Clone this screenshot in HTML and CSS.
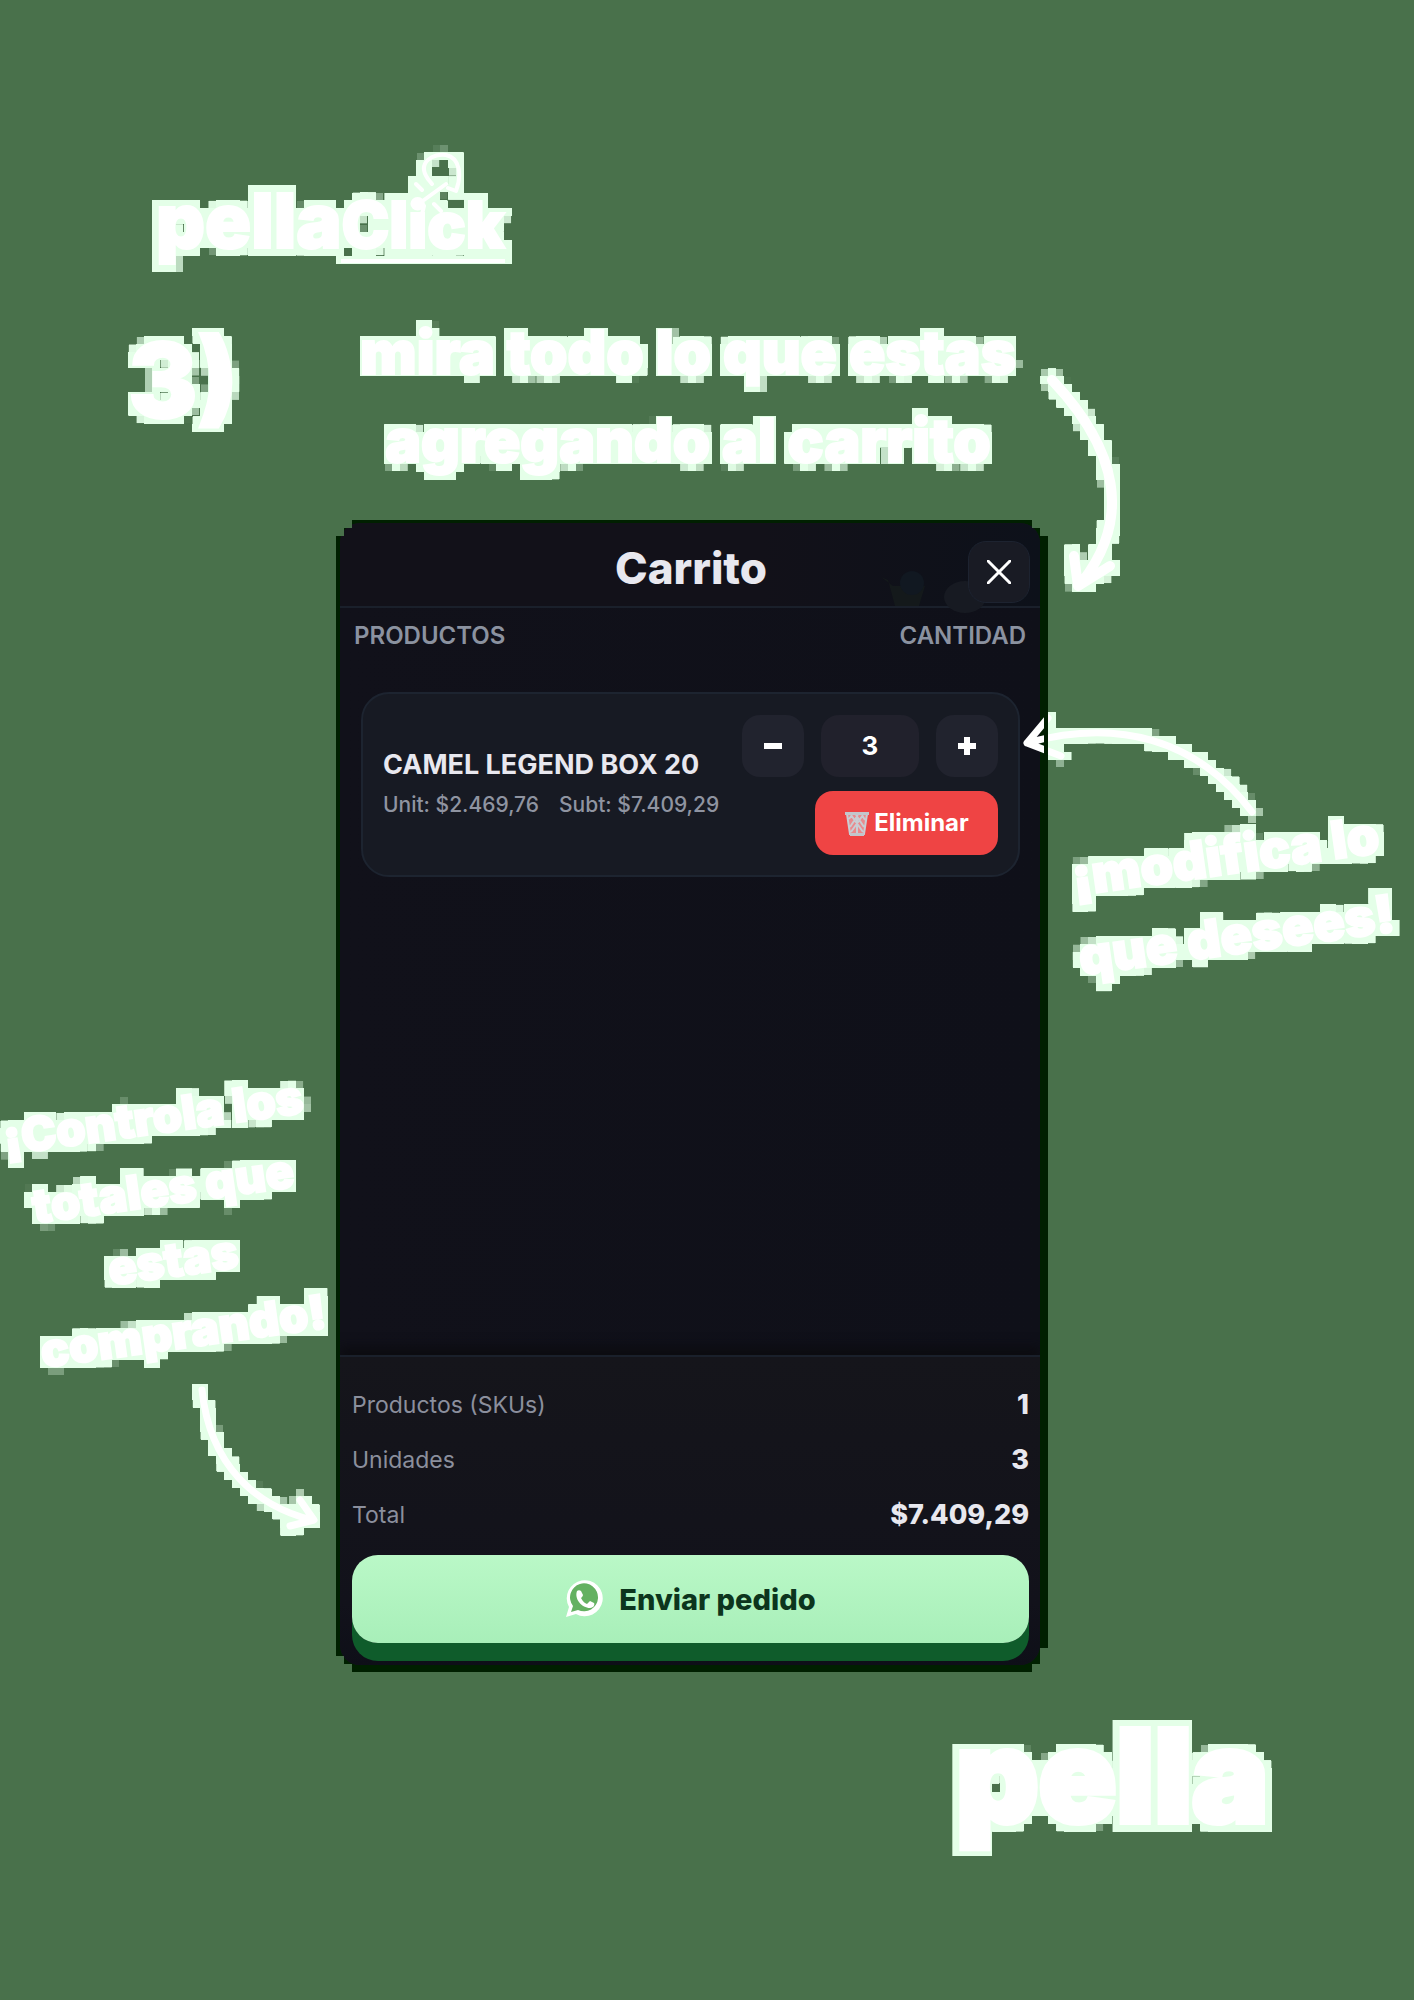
FILE: index.html
```html
<!DOCTYPE html>
<html lang="es">
<head>
<meta charset="utf-8">
<meta name="viewport" content="width=device-width, initial-scale=1">
<title>pellaClick – Carrito</title>
<link rel="stylesheet" href="styles.css">
</head>
<body>
<svg class="defs" aria-hidden="true">
  <!-- Pale 8px block outline behind every annotation -->
  <filter id="block-halo" filterUnits="userSpaceOnUse" primitiveUnits="userSpaceOnUse" x="-80" y="-80" width="1120" height="560" color-interpolation-filters="sRGB">
    <feMorphology in="SourceAlpha" operator="dilate" radius="4" result="wide"/>
    <feFlood x="3" y="3" width="2" height="2" flood-color="#e4ffe8" result="dot"/>
    <feComposite in="dot" in2="dot" operator="over" x="0" y="0" width="8" height="8"/>
    <feTile result="dots"/>
    <feComposite in="dots" in2="wide" operator="in"/>
    <feMorphology operator="dilate" radius="3" result="blocks"/>
    <feMerge>
      <feMergeNode in="blocks"/>
      <feMergeNode in="SourceGraphic"/>
    </feMerge>
  </filter>
</svg>
<main class="poster">
  <header class="intro">
    <div class="brand halo">
      <span class="brand-name">pella<span class="brand-click">Click</span></span>
      <svg class="brand-cursor" viewBox="0 0 56 72" aria-hidden="true">
        <path d="M14 27C2 10 20 1 32 3c14 3 16 20 10 36l-8-3M14 27l4 5M10 48l22-16M2 32l6 6M10 54l-2 8M20 52l7 7" fill="none" stroke="#fff" stroke-width="4" stroke-linecap="round" stroke-linejoin="round"/>
      </svg>
    </div>
    <div class="step">
      <span class="step-number halo">3)</span>
      <h1 class="step-title halo">mira todo lo que estas<br>agregando al carrito</h1>
      <svg class="step-arrow halo" viewBox="0 0 96 240" aria-hidden="true">
        <path d="M12 12C78 82 92 150 42 214M34 188l4 30 32-20" />
      </svg>
    </div>
  </header>

  <div class="stage">
    <aside class="side side-left">
      <div class="note halo"><p class="note-text">¡Controla los<br>totales que<br>estas<br>comprando!</p></div>
      <svg class="arrow arrow-total halo" viewBox="0 0 160 160" aria-hidden="true">
        <path d="M34 6C42 82 88 122 144 136M132 116l14 20-24 6"/>
      </svg>
    </aside>

    <div class="frame">
      <section class="cart" aria-label="Carrito">
        <header class="cart-head">
          <svg class="cart-ghost" viewBox="0 0 110 50" aria-hidden="true">
            <path d="M2 6l7 3 7 26h24l6-20H14" fill="#14191b"/><circle cx="33" cy="12" r="12" fill="#111821"/><ellipse cx="86" cy="26" rx="21" ry="16" fill="#171a22"/>
          </svg>
          <h2 class="cart-title">Carrito</h2>
          <button class="close" type="button" aria-label="Cerrar">
            <svg width="24" height="24" viewBox="0 0 24 24"><path d="M1 1l22 22M23 1L1 23" stroke="#fff" stroke-width="3" stroke-linecap="round"/></svg>
          </button>
        </header>
        <div class="columns"><span>PRODUCTOS</span><span>CANTIDAD</span></div>
        <article class="item">
          <div class="item-info">
            <h3 class="item-name">CAMEL LEGEND BOX 20</h3>
            <p class="item-prices"><span>Unit: $2.469,76</span><span>Subt: $7.409,29</span></p>
          </div>
          <div class="item-actions">
            <button class="qty" type="button" aria-label="Restar"><svg width="20" height="20" viewBox="0 0 20 20"><path d="M1 10h18" stroke="#fff" stroke-width="6"/></svg></button>
            <input class="qty-value" type="text" value="3" aria-label="Cantidad">
            <button class="qty" type="button" aria-label="Sumar"><svg width="20" height="20" viewBox="0 0 20 20"><path d="M1 10h18M10 1v18" stroke="#fff" stroke-width="6"/></svg></button>
            <button class="remove" type="button">
              <svg width="26" height="26" viewBox="0 0 26 26" aria-hidden="true"><path d="M3 4l3 20h14l3-20z" fill="#e98a8d"/><path d="M3 4l3 20h14l3-20M7 5l12 17M12 5l8 12M18 5l3 5M19 5L7 22M14 5L6 17M8 5L5 9M13 4v20" fill="none" stroke="#c9cdd3" stroke-width="2"/><path d="M1 2h24v3H1zM6 23h14v3H6z" fill="#c3c6cc"/></svg>Eliminar</button>
          </div>
        </article>
        <footer class="summary">
          <dl class="totals">
            <div class="total"><dt>Productos (SKUs)</dt><dd>1</dd></div>
            <div class="total"><dt>Unidades</dt><dd>3</dd></div>
            <div class="total"><dt>Total</dt><dd>$7.409,29</dd></div>
          </dl>
          <button class="send" type="button">
            <svg width="38" height="38" viewBox="0 0 38 38" aria-hidden="true">
              <path d="M1 37l3-10A18 18 0 1 1 11 34z" fill="#fff"/>
              <path d="M6 32l2-6A14 14 0 1 1 13 30z" fill="#64b161"/>
              <path d="M12 11c1-1 3-1 4 0l2 4c0 1-2 3-2 3 2 4 4 5 6 6l3-3 4 2c1 1 0 5-4 5-8 0-16-9-13-17z" fill="#fff"/>
            </svg>Enviar pedido</button>
        </footer>
      </section>
    </div>

    <aside class="side side-right">
      <svg class="arrow arrow-edit halo" viewBox="0 0 256 112" aria-hidden="true">
        <path d="M11 39C100 14 180 34 236 108M32 14L11 39l34 13"/>
      </svg>
      <svg class="arrow-tip" viewBox="0 0 28 60" aria-hidden="true">
        <path d="M11 39C100 14 180 34 236 108M32 14L11 39l34 13"/>
      </svg>
      <div class="note note-edit halo"><p class="note-text">¡modifica lo<br>que desees!</p></div>
    </aside>
  </div>

  <footer class="sign"><span class="sign-name halo">pella</span></footer>
</main>
</body>
</html>
```
FILE: styles.css
```css
* { box-sizing: border-box; margin: 0; }

body {
  background: #49714b;
  color: #fff;
  font-family: Inter, "Liberation Sans", sans-serif;
}

button, input { font: inherit; color: inherit; border: 0; padding: 0; }

.defs { position: absolute; width: 0; height: 0; }
.halo { filter: url(#block-halo); -webkit-text-stroke: 2px #fff; }

.poster { min-height: 100vh; padding: 136px 0 64px; overflow: hidden; }

/* Intro */
.brand {
  position: relative;
  width: 368px;
  height: 152px;
  margin-left: 152px;
  padding: 20px 0 0 4px;
  font-weight: 900;
  font-size: 76px;
  line-height: 128px;
}
.brand-name { display: flex; align-items: baseline; }
.brand-click { border-bottom: 4px solid #fff; font-size: 64px; line-height: 68px; }
.brand-cursor { position: absolute; left: 262px; top: 16px; width: 56px; height: 72px; }

.step { position: relative; display: flex; height: 232px; }
.step-number {
  width: 120px;
  margin: 32px 0 0 128px;
  font-weight: 900;
  font-size: 104px;
  line-height: 120px;
}
.step-title {
  width: 720px;
  margin-left: 80px;
  padding-top: 20px;
  text-align: center;
  font-weight: 900;
  font-size: 60px;
  line-height: 88px;
}
.step-arrow { position: absolute; left: 1040px; top: 80px; width: 96px; height: 240px; overflow: visible; }
.step-arrow path, .arrow path, .arrow-tip path {
  fill: none;
  stroke: #fff;
  stroke-width: 7;
  stroke-linecap: round;
  stroke-linejoin: round;
}
.step-arrow path { stroke-width: 10; }

/* Card between the two side notes */
.stage { display: grid; grid-template-columns: 336px minmax(0, 1fr) 366px; }
.side { display: flex; flex-direction: column; }
.side-left { padding-top: 560px; }
.side-right { position: relative; padding-top: 184px; }

.note { height: 304px; }
.note-text {
  width: 336px;
  text-align: center;
  font-weight: 900;
  font-size: 47px;
  line-height: 72px;
  transform: rotate(-8deg);
  white-space: nowrap;
}
.note-edit { height: 184px; }
.note-edit .note-text { width: 366px; font-size: 52px; line-height: 80px; }

.arrow { overflow: visible; }
.arrow-total { width: 160px; height: 160px; margin-left: 168px; }
.arrow-edit { width: 256px; height: 112px; margin-left: -32px; }
.arrow-tip { position: absolute; z-index: 2; left: -32px; top: 184px; width: 28px; height: 60px; }

.frame {
  position: relative;
  z-index: 1;
  padding: 3px 8px 7px 4px;
  background: #002000;
  clip-path: polygon(
    16px 0, calc(100% - 16px) 0, calc(100% - 16px) 8px, calc(100% - 8px) 8px, calc(100% - 8px) 16px, 100% 16px,
    100% calc(100% - 24px), calc(100% - 8px) calc(100% - 24px), calc(100% - 8px) calc(100% - 8px),
    calc(100% - 16px) calc(100% - 8px), calc(100% - 16px) 100%, 16px 100%, 16px calc(100% - 8px),
    8px calc(100% - 8px), 8px calc(100% - 16px), 0 calc(100% - 16px), 0 16px, 8px 16px, 8px 8px, 16px 8px);
}
.cart {
  display: flex;
  flex-direction: column;
  height: 100%;
  min-height: 1142px;
  border-radius: 20px;
  background: linear-gradient(90deg, #11111a, #0f1019);
  overflow: hidden;
}
.cart-head {
  position: relative;
  display: grid;
  grid-template-columns: 62px 1fr 62px;
  align-items: center;
  padding: 14px 10px 10px 12px;
  height: 85px;
  border-bottom: 2px solid #1a202b;
  background: linear-gradient(90deg, #121119 60%, #0d111a);
}
.cart-ghost { position: absolute; right: 51px; top: 48px; width: 110px; height: 50px; }
.cart-title { grid-column: 2; padding-bottom: 4px; text-align: center; font-size: 44px; line-height: 52px; font-weight: 800; color: #e8e8ef; }
.close {
  position: relative;
  display: grid;
  place-items: center;
  width: 62px;
  height: 62px;
  margin-top: 4px;
  border: 1px solid #1d2330;
  border-radius: 18px;
  background: #191b24;
}
.columns { position: relative; display: flex; justify-content: space-between; padding: 13px 14px 0; font-size: 24px; line-height: 30px; font-weight: 600; color: #8b92a0; }

.item {
  display: flex;
  justify-content: space-between;
  align-items: center;
  margin: 41px 20px 0 21px;
  padding: 20px;
  height: 185px;
  border: 2px solid #1d2430;
  border-radius: 28px;
  background: #171a23;
}
.item-name { font-size: 27px; line-height: 40px; font-weight: 700; color: #e8e8ef; white-space: nowrap; }
.item-prices { display: flex; gap: 20px; font-size: 21px; line-height: 40px; font-weight: 500; color: #8f94a1; white-space: nowrap; }
.item-actions { display: grid; grid-template-columns: 62px 98px 62px; gap: 14px 17px; }
.qty, .qty-value { height: 62px; border-radius: 18px; background: #21232e; }
.qty { display: grid; place-items: center; }
.qty-value { width: 98px; text-align: center; font-size: 26px; font-weight: 700; background: #21212c; }
.remove {
  grid-column: 1 / -1;
  justify-self: end;
  display: flex;
  align-items: center;
  justify-content: center;
  gap: 4px;
  width: 183px;
  height: 64px;
  border-radius: 18px;
  background: #ef4444;
  font-size: 24px;
  font-weight: 700;
}

.summary {
  margin-top: auto;
  padding: 20px 11px 22px 12px;
  border-top: 2px solid #1a202b;
  background: linear-gradient(#15151b, #12121b 80%, #0e0f18);
  box-shadow: 0 -8px 10px #0c0c11;
}
.total { display: flex; justify-content: space-between; align-items: center; height: 55px; font-size: 23px; color: #8b8f9d; }
.total dd { font-size: 27px; font-weight: 800; color: #e8e8ef; }
.send {
  display: flex;
  align-items: center;
  justify-content: center;
  gap: 16px;
  width: 100%;
  height: 88px;
  margin-top: 13px;
  border-radius: 26px;
  background: linear-gradient(#baf8c7, #a8efb9);
  box-shadow: 0 18px 0 #0f5c2b;
  font-size: 29px;
  font-weight: 800;
  color: #0c351d;
}

.sign { display: flex; justify-content: flex-end; padding: 16px 142px 0 0; }
.sign-name { width: 320px; height: 176px; padding-left: 4px; font-size: 128px; line-height: 176px; font-weight: 900; -webkit-text-stroke-width: 6px; }
```
